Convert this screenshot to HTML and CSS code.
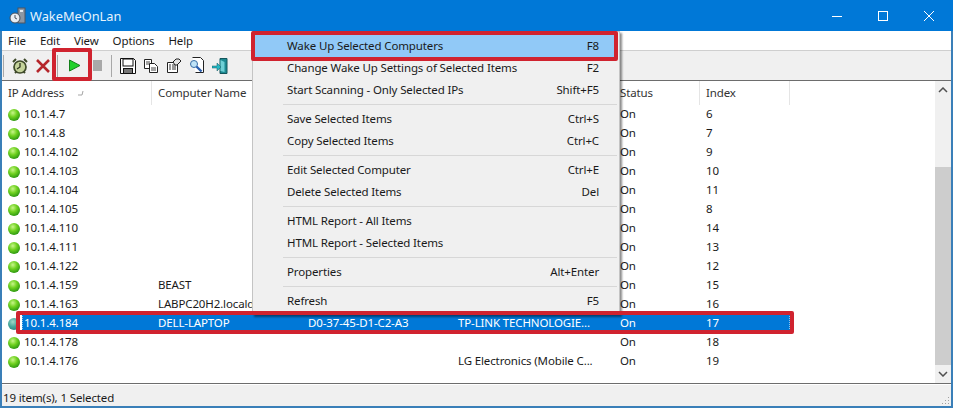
FILE: index.html
```html
<!DOCTYPE html>
<html lang="en">
<head>
    <meta charset="UTF-8">
    <title>WakeMeOnLan</title>
    <link rel="stylesheet" href="styles.css">
</head>
<body>
    <div class="window">
        <div class="titlebar">
            <svg class="app-icon" width="18" height="18" viewBox="0 0 18 18">
                <rect x="9" y="1" width="7" height="15" fill="#8d97a3" stroke="#4c5560"/>
                <rect x="11" y="3" width="3" height="2" fill="#e6eaee"/>
                <circle cx="6" cy="11" r="5" fill="#e8edf2" stroke="#46505a"/>
                <path d="M6 8v3l2 1" fill="none" stroke="#46505a"/>
            </svg>
            <span class="title">WakeMeOnLan</span>
            <div class="win-controls">
                <svg width="12" height="12" viewBox="0 0 12 12"><path d="M1 6.5h10" stroke="#fff"/></svg>
                <svg width="12" height="12" viewBox="0 0 12 12"><rect x="1.5" y="1.5" width="9" height="9" fill="none" stroke="#fff"/></svg>
                <svg width="12" height="12" viewBox="0 0 12 12"><path d="M1 1l10 10M11 1L1 11" stroke="#fff"/></svg>
            </div>
        </div>

        <div class="menubar">
            <span>File</span>
            <span>Edit</span>
            <span>View</span>
            <span>Options</span>
            <span>Help</span>
        </div>

        <div class="toolbar">
            <div class="tb-sep tb-sep-first"></div>
            <div class="tb-btn">
                <svg width="18" height="18" viewBox="0 0 18 18">
                    <path d="M2 5l3-3M16 5l-3-3M4 16l2-2M14 16l-2-2" stroke="#3f4a2a" stroke-width="2"/>
                    <circle cx="9" cy="10" r="6" fill="#c4d29a" stroke="#3f4a2a" stroke-width="1.7"/>
                    <path d="M9 6v4l-3 2" fill="none" stroke="#2e3620" stroke-width="1.3"/>
                </svg>
            </div>
            <div class="tb-btn">
                <svg width="16" height="16" viewBox="0 0 16 16"><path d="M2 2l12 12M14 2L2 14" stroke="#b5262b" stroke-width="2.6"/></svg>
            </div>
            <div class="tb-sep"></div>
            <div class="tb-btn">
                <svg width="13" height="13" viewBox="0 0 13 13"><path d="M1.5 1v11l10.5-5.5z" fill="#1fd12a" stroke="#13801a"/></svg>
            </div>
            <div class="tb-btn">
                <div class="stop-icon"></div>
            </div>
            <div class="tb-sep tb-sep-last"></div>
            <div class="tb-btn">
                <svg width="16" height="16" viewBox="0 0 16 16">
                    <path d="M.5.5h13l2 2v13H.5z" fill="#fff" stroke="#111"/>
                    <rect x="3" y="1" width="10" height="7" fill="#fff" stroke="#111"/>
                    <rect x="3.5" y="10.5" width="9" height="5" fill="#777" stroke="#111"/>
                </svg>
            </div>
            <div class="tb-btn">
                <svg width="16" height="16" viewBox="0 0 16 16">
                    <path d="M1.5 1.5h7v9h-7z" fill="#fff" stroke="#222"/>
                    <path d="M6.5 5.500h5l3 3v6h-8z" fill="#fff" stroke="#222"/>
                    <path d="M3 4h4M3 6h3M8 10h5M8 12h5" stroke="#444"/>
                </svg>
            </div>
            <div class="tb-btn">
                <svg width="16" height="16" viewBox="0 0 16 16">
                    <path d="M1.5 4.500h10v10h-10z" fill="#fff" stroke="#222"/>
                    <path d="M3 7h2M6 7h4M3 9h2M6 9h4M3 11h2M6 11h4" stroke="#333"/>
                    <path d="M7 4l3-3h3l2 2-4 4H9z" fill="#e4e4e4" stroke="#222"/>
                </svg>
            </div>
            <div class="tb-btn">
                <svg width="16" height="17" viewBox="0 0 16 17">
                    <path d="M3.500 .5h8l3 3v12h-8" fill="#fff" stroke="#222"/>
                    <circle cx="5" cy="7" r="3.500" fill="#bfe3f7" stroke="#3a6ea5"/>
                    <path d="M7.500 9.500l5 5" stroke="#2a5fb0" stroke-width="2.400"/>
                </svg>
            </div>
            <div class="tb-btn">
                <svg width="16" height="16" viewBox="0 0 16 16">
                    <path d="M8 .5h7v15H8z" fill="#1d8a92" stroke="#14565c"/>
                    <path d="M8.500 2l4 2v10l-4-1z" fill="#6fd0d6"/>
                    <path d="M0 8h5V5l4 4-4 4v-3H0z" fill="#22b8c4" stroke="#14565c" stroke-width=".5"/>
                </svg>
            </div>
        </div>

        <div class="listview">
            <div class="list-body">
                <div class="list-head">
                    <div class="col-head">IP Address
                        <svg class="sort-mark" width="6" height="6" viewBox="0 0 6 6"><path d="M0 5h4l1-4" fill="none" stroke="#a5a5a5"/></svg>
                    </div>
                    <div class="col-head">Computer Name</div>
                    <div class="col-head"></div>
                    <div class="col-head"></div>
                    <div class="col-head">Status</div>
                    <div class="col-head">Index</div>
                </div>

                <div class="row"><i class="dot"></i><div class="cells"><span>10.1.4.7</span><span></span><span></span><span></span><span>On</span><span>6</span></div></div>
                <div class="row"><i class="dot"></i><div class="cells"><span>10.1.4.8</span><span></span><span></span><span></span><span>On</span><span>7</span></div></div>
                <div class="row"><i class="dot"></i><div class="cells"><span>10.1.4.102</span><span></span><span></span><span></span><span>On</span><span>9</span></div></div>
                <div class="row"><i class="dot"></i><div class="cells"><span>10.1.4.103</span><span></span><span></span><span></span><span>On</span><span>10</span></div></div>
                <div class="row"><i class="dot"></i><div class="cells"><span>10.1.4.104</span><span></span><span></span><span></span><span>On</span><span>11</span></div></div>
                <div class="row"><i class="dot"></i><div class="cells"><span>10.1.4.105</span><span></span><span></span><span></span><span>On</span><span>8</span></div></div>
                <div class="row"><i class="dot"></i><div class="cells"><span>10.1.4.110</span><span></span><span></span><span></span><span>On</span><span>14</span></div></div>
                <div class="row"><i class="dot"></i><div class="cells"><span>10.1.4.111</span><span></span><span></span><span></span><span>On</span><span>13</span></div></div>
                <div class="row"><i class="dot"></i><div class="cells"><span>10.1.4.122</span><span></span><span></span><span></span><span>On</span><span>12</span></div></div>
                <div class="row"><i class="dot"></i><div class="cells"><span>10.1.4.159</span><span>BEAST</span><span></span><span></span><span>On</span><span>15</span></div></div>
                <div class="row"><i class="dot"></i><div class="cells"><span>10.1.4.163</span><span>LABPC20H2.locald</span><span></span><span></span><span>On</span><span>16</span></div></div>
                <div class="row selected"><i class="dot"></i><div class="cells"><span>10.1.4.184</span><span>DELL-LAPTOP</span><span>D0-37-45-D1-C2-A3</span><span>TP-LINK TECHNOLOGIE...</span><span>On</span><span>17</span></div></div>
                <div class="row"><i class="dot"></i><div class="cells"><span>10.1.4.178</span><span></span><span></span><span></span><span>On</span><span>18</span></div></div>
                <div class="row"><i class="dot"></i><div class="cells"><span>10.1.4.176</span><span></span><span></span><span>LG Electronics (Mobile C...</span><span>On</span><span>19</span></div></div>
            </div>

            <div class="scrollbar">
                <svg class="sb-arrow" width="10" height="6" viewBox="0 0 10 6"><path d="M1 5l4-4 4 4" fill="none" stroke="#505050" stroke-width="1.500"/></svg>
                <div class="sb-track"><div class="sb-thumb"></div></div>
                <svg class="sb-arrow" width="10" height="6" viewBox="0 0 10 6"><path d="M1 1l4 4 4-4" fill="none" stroke="#505050" stroke-width="1.500"/></svg>
            </div>
        </div>

        <div class="statusbar">
            <span>19 item(s), 1 Selected</span>
            <svg class="grip" width="10" height="10" viewBox="0 0 10 10"><path d="M8 1h1v1H8zM5 4h1v1H5zM8 4h1v1H8zM2 7h1v1H2zM5 7h1v1H5zM8 7h1v1H8z" fill="#a0a0a0"/></svg>
        </div>
    </div>

    <div class="context-menu">
        <div class="menu-item active"><span>Wake Up Selected Computers</span><span>F8</span></div>
        <div class="menu-item"><span>Change Wake Up Settings of Selected Items</span><span>F2</span></div>
        <div class="menu-item"><span>Start Scanning - Only Selected IPs</span><span>Shift+F5</span></div>
        <div class="menu-sep"></div>
        <div class="menu-item"><span>Save Selected Items</span><span>Ctrl+S</span></div>
        <div class="menu-item"><span>Copy Selected Items</span><span>Ctrl+C</span></div>
        <div class="menu-sep"></div>
        <div class="menu-item"><span>Edit Selected Computer</span><span>Ctrl+E</span></div>
        <div class="menu-item"><span>Delete Selected Items</span><span>Del</span></div>
        <div class="menu-sep"></div>
        <div class="menu-item"><span>HTML Report - All Items</span></div>
        <div class="menu-item"><span>HTML Report - Selected Items</span></div>
        <div class="menu-sep"></div>
        <div class="menu-item"><span>Properties</span><span>Alt+Enter</span></div>
        <div class="menu-sep"></div>
        <div class="menu-item"><span>Refresh</span><span>F5</span></div>
    </div>

    <div class="callout callout-play"></div>
    <div class="callout callout-menu"></div>
    <div class="callout callout-row"></div>
</body>
</html>
```

FILE: styles.css
```css
body {
    margin: 0;
    font-family: "Noto Sans", "Open Sans", sans-serif;
    font-size: 11.5px;
    letter-spacing: -0.13px;
    color: #1a1a1a;
    background-color: #fff;
    overflow: hidden;
}
.window {
    width: 953px;
    height: 408px;
    box-sizing: border-box;
    display: flex;
    flex-direction: column;
    border: solid #3a7fb8;
    border-width: 0 2px 2px;
}
.titlebar {
    height: 31px;
    margin: 0 -2px;
    padding-left: 9px;
    display: flex;
    align-items: center;
    flex-shrink: 0;
    background-color: #0078d7;
    color: #fff;
}
.app-icon {
    margin-right: 3px;
}
.title {
    font-size: 12.8px;
    letter-spacing: 0;
    color: #e6f3fc;
}
.win-controls {
    margin-left: auto;
    margin-right: 18px;
    display: flex;
    gap: 34px;
}
.menubar {
    height: 20px;
    box-sizing: border-box;
    padding-left: 6px;
    display: flex;
    gap: 14px;
    align-items: center;
    flex-shrink: 0;
    background-color: #fff;
    border-bottom: 1px solid #cfcfcf;
}
.toolbar {
    height: 29px;
    display: flex;
    align-items: center;
    flex-shrink: 0;
    background-color: #f0f0f0;
}
.tb-sep {
    width: 1px;
    height: 22px;
    margin: 0 5px 0 3px;
    background-color: #a8a8a8;
}
.tb-sep-first {
    margin: 0 4px 0 1px;
}
.tb-sep-last {
    margin: 0 4px 0 2px;
}
.tb-btn {
    width: 23px;
    height: 23px;
    display: flex;
    align-items: center;
    justify-content: center;
}
.stop-icon {
    width: 9px;
    height: 11px;
    background-color: #a9a9a9;
}
.listview {
    flex: 1;
    min-height: 0;
    display: flex;
    border-top: 1px solid #6d6d6d;
    border-bottom: 1px solid #6d6d6d;
}
.list-body {
    flex: 1;
    min-width: 0;
}
.list-head {
    width: 788px;
    height: 24px;
    display: grid;
    grid-template-columns: 150px 150px 150px 162px 86px 90px;
}
.col-head {
    position: relative;
    padding-left: 6px;
    line-height: 23px;
    color: #333;
    box-shadow: inset -1px 0 0 #e5e5e5;
}
.sort-mark {
    position: absolute;
    left: 76px;
    top: 9px;
}
.row {
    width: 788px;
    height: 19px;
    display: flex;
    line-height: 18px;
}
.dot {
    width: 12px;
    height: 12px;
    margin: 4px 2px 0 6px;
    border-radius: 50%;
    flex-shrink: 0;
    background: radial-gradient(circle at 40% 32%, #c8f58a 0, #6fd11f 38%, #2f9a12 75%, #256f12 100%);
}
.cells {
    flex: 1;
    padding-left: 2px;
    display: grid;
    grid-template-columns: 134px 150px 150px 162px 86px 84px;
    white-space: nowrap;
}
.selected .cells {
    background-color: #0078d7;
    color: #fff;
    outline: 1px dotted #8fc4ee;
    outline-offset: -1px;
}
.selected .dot {
    background: radial-gradient(circle at 40% 32%, #9fd6c8 0, #45a59a 45%, #1f6f74 100%);
}
.scrollbar {
    width: 16px;
    display: flex;
    flex-direction: column;
    align-items: center;
    flex-shrink: 0;
    background-color: #f0f0f0;
}
.sb-arrow {
    margin: 6px 0;
    flex-shrink: 0;
}
.sb-track {
    flex: 1;
    width: 100%;
}
.sb-thumb {
    width: 100%;
    height: 198px;
    margin-top: 68px;
    background-color: #cdcdcd;
}
.statusbar {
    height: 22px;
    box-sizing: border-box;
    padding: 3px 0 0 1px;
    display: flex;
    align-items: center;
    justify-content: space-between;
    flex-shrink: 0;
    background-color: #f0f0f0;
    border-top: 1px solid #fff;
}
.grip {
    margin-right: 1px;
    align-self: flex-end;
}
.context-menu {
    position: absolute;
    left: 252px;
    top: 31px;
    width: 368px;
    box-sizing: border-box;
    padding: 3px 2px 2px;
    background-color: #f0f0f0;
    border: 1px solid #c4c4c4;
    box-shadow: 2px 2px 2px rgba(0, 0, 0, 0.45);
}
.menu-item {
    height: 22px;
    box-sizing: border-box;
    padding: 0 18px 2px 32px;
    display: flex;
    justify-content: space-between;
    align-items: center;
}
.menu-item.active {
    background-color: #91c9f7;
}
.menu-sep {
    height: 1px;
    margin: 3px 0 3px 28px;
    background-color: #d7d7d7;
}
.callout {
    position: absolute;
    box-sizing: border-box;
    border: 4px solid #d0232f;
    border-radius: 2px;
}
.callout-play {
    left: 52px;
    top: 48px;
    width: 40px;
    height: 33px;
}
.callout-menu {
    left: 251px;
    top: 31px;
    width: 367px;
    height: 30px;
}
.callout-row {
    left: 16px;
    top: 311px;
    width: 778px;
    height: 23px;
}
```
